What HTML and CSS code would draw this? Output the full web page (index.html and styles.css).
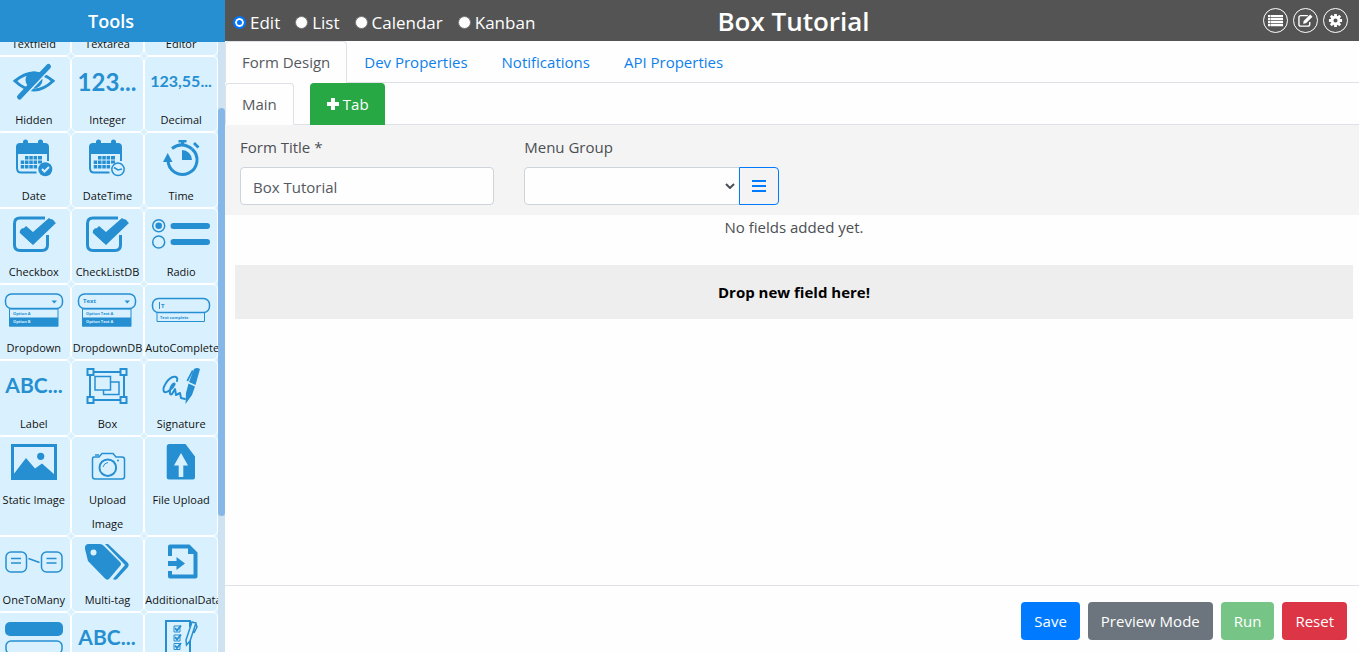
FILE: index.html
```html
<!DOCTYPE html>
<html lang="en">
<head>
<meta charset="utf-8">
<title>Box Tutorial</title>
<link rel="stylesheet" href="styles.css">
</head>
<body>
<div class="app">
  <aside class="sidebar">
    <h2 class="sidebar-title">Tools</h2>
    <div class="tools-wrap">
      <div class="tools" id="tools">
        <div class="tile"><span class="icon"></span><span>Textfield</span></div>
        <div class="tile"><span class="icon"></span><span>Textarea</span></div>
        <div class="tile"><span class="icon"></span><span>Editor</span></div>

        <div class="tile"><svg class="icon" viewBox="0 0 60 50"><path class="line w3" d="M11 24Q30 8 49 24Q30 42 11 24Z"/><circle cx="30" cy="23" r="8.500"/><path class="cut" d="M47 11L18 42"/><path class="line w5 round" d="M44.500 9.500L15.500 40"/></svg><span>Hidden</span></div>
        <div class="tile"><svg class="icon" viewBox="0 0 60 50"><text class="glyph g24" x="30" y="34">123...</text></svg><span>Integer</span></div>
        <div class="tile"><svg class="icon" viewBox="0 0 60 50"><text class="glyph g16" x="30" y="30">123,55...</text></svg><span>Decimal</span></div>

        <div class="tile"><svg class="icon" viewBox="0 0 60 50"><g id="cal"><path d="M12 21V14Q12 10 16 10H19V9Q19 6.500 21.500 6.500T24 9V10H34V9Q34 6.500 36.500 6.500T39 9V10H41Q45 10 45 14V21Z"/><path class="line w2" d="M13 20V35Q13 39.500 17 39.500H32.500M44 20V28"/><path d="M21 23h3.500v3.500h-3.500zM25.300 23h3.500v3.500h-3.500zM29.600 23h3.500v3.500h-3.500zM34 23h4v3.500h-4zM16.700 27.500h3.500v3.500h-3.500zM21 27.500h3.500v3.500h-3.500zM25.300 27.500h3.500v3.500h-3.500zM29.600 27.500h3.500v3.500h-3.500zM34 27.500h4v3h-4zM16.700 32h3.500v3.500h-3.500zM21 32h3.500v3.500h-3.500zM25.300 32h3.500v3.500h-3.500zM29.600 32h3.500v3.500h-3.500z"/></g><circle cx="41.300" cy="36.300" r="7"/><path class="line pale w2" d="M38 36l2.500 2.500L45 34"/></svg><span>Date</span></div>
        <div class="tile"><svg class="icon" viewBox="0 0 60 50"><use href="#cal"/><circle class="line panel w15" cx="41" cy="36.300" r="6.200"/><path class="line w15" d="M37 34.500L41 37L45 36"/></svg><span>DateTime</span></div>
        <div class="tile"><svg class="icon" viewBox="0 0 60 50"><path class="line w3" d="M17 27A14.500 14.500 0 1 0 41 16"/><path class="line w3" d="M21 15.500Q31 8 41 16"/><path d="M16.700 20L21.500 29H12ZM27.500 7H35.500V9.500H33V13H30V9.500H27.500ZM42 11L44 9L48.500 13.500L46.500 15.500ZM31 17A10 10 0 0 1 41 27H31Z"/></svg><span>Time</span></div>

        <div class="tile"><svg class="icon" viewBox="0 0 60 50"><g id="chk"><path class="line w3" d="M41 9H16Q10.500 9 10.500 14.500V36Q10.500 41.500 16 41.500H38Q43.500 41.500 43.500 36V26"/><path class="line w6 round" d="M47.500 13.500L28.300 31L19 22.500"/><path d="M15.500 23.500L22 17L29 23L45 9L52 14L29 36Z"/></g></svg><span>Checkbox</span></div>
        <div class="tile"><svg class="icon" viewBox="0 0 60 50"><use href="#chk"/></svg><span>CheckListDB</span></div>
        <div class="tile"><svg class="icon" viewBox="0 0 60 50"><circle class="line w15" cx="7.700" cy="16.700" r="6"/><circle cx="7.700" cy="16.700" r="3.300"/><circle class="line w15" cx="7.700" cy="33" r="6"/><path class="line w6 round" d="M22.500 17H56M22.500 33H56"/></svg><span>Radio</span></div>

        <div class="tile"><svg class="icon" viewBox="0 0 60 50"><g id="dd"><rect class="line w15" x="1.500" y="9" width="57" height="14.500" rx="6"/><path d="M47.500 15.500H53L50.300 18.500Z"/><rect class="line w1" x="5.500" y="24" width="48.500" height="17"/><path d="M5.500 32.500H54V41.500H5.500Z"/></g><text class="tiny" x="9" y="30">Option A</text><text class="tiny light" x="9" y="38">Option B</text></svg><span>Dropdown</span></div>
        <div class="tile"><svg class="icon" viewBox="0 0 60 50"><use href="#dd"/><text class="small" x="6" y="18">Text</text><text class="tiny" x="9" y="30">Option Text A</text><text class="tiny light" x="9" y="38">Option Text A</text></svg><span>DropdownDB</span></div>
        <div class="tile"><svg class="icon" viewBox="0 0 60 50"><rect class="line w15" x="1.500" y="13.500" width="57" height="14" rx="6"/><path class="line w1" d="M6 27.500V36.500H53.500V27.500M8.500 17V24"/><text class="small" x="10" y="23">T</text><text class="tiny" x="9" y="34">Text complete</text></svg><span>AutoComplete</span></div>

        <div class="tile"><svg class="icon" viewBox="0 0 60 50"><text class="glyph g20" x="30" y="32">ABC...</text></svg><span>Label</span></div>
        <div class="tile"><svg class="icon" viewBox="0 0 60 50"><path class="line w2" d="M13 11H47V39H13Z"/><path class="line w15" d="M26 33.500H42V21H34"/><path class="line w15" d="M26.500 29V33.500"/><rect class="line w15" x="18" y="15.500" width="15.500" height="13.500"/><path class="line panel w2" d="M10.500 8H16.500V14H10.500ZM43.500 8H49.500V14H43.500ZM10.500 36H16.500V42H10.500ZM43.500 36H49.500V42H43.500Z"/></svg><span>Box</span></div>
        <div class="tile"><svg class="icon" viewBox="0 0 60 50"><path class="line w2 round" d="M26 20C28 14 20 14 15 22C10 30 13 34 19 29C24 25 25 21 22 23C18 27 18 36 21 33L24 28L25 34L29 32L30 37L34 38"/><path d="M43 8Q46 6 49 8L44.500 24L38 21ZM37.500 22.500L44 25.500L41 34L34.500 43L35 32ZM41 9L35.500 19.500L37 20.500L42.500 10Z"/></svg><span>Signature</span></div>

        <div class="tile"><svg class="icon" viewBox="0 0 60 50"><rect class="line w3" x="8.500" y="8.500" width="43" height="33"/><circle cx="36.700" cy="19.300" r="3.600"/><path d="M9 38L22 21L31 31.500L38 26.500L51 38V42H9Z"/></svg><span>Static Image</span></div>
        <div class="tile"><svg class="icon" viewBox="0 0 60 50"><path class="line w15" d="M17 20H22L25 16.500H36L39 20H45Q47.500 20 47.500 22.500V39.500Q47.500 42 45 42H18Q15.500 42 15.500 39.500V22.500Q15.500 20 17 20ZM18 18H22"/><circle class="line w2" cx="30.800" cy="30.700" r="8.300"/><path class="line w1" d="M26 30Q27 26 31 25.500"/><circle cx="41" cy="23.500" r="1"/></svg><span>Upload<br>Image</span></div>
        <div class="tile"><svg class="icon" viewBox="0 0 60 50"><path fill-rule="evenodd" d="M18 7H34.500L44 19.500V40.500Q44 42.500 42 42.500H18Q15.700 42.500 15.700 40.500V9.500Q15.700 7 18 7ZM30 16L23 28.500H27.700V40H32.300V28.500H37Z"/></svg><span>File Upload</span></div>

        <div class="tile"><svg class="icon" viewBox="0 0 60 50"><rect class="line w15" x="2" y="15" width="20.500" height="20" rx="5"/><rect class="line w15" x="37.500" y="15" width="20.500" height="20" rx="5"/><path class="line w15" d="M7 21.500H17M7 26H17M42.500 21.500H52.500M42.500 26H52.500M24.500 21.500L35.500 25.500"/></svg><span>OneToMany</span></div>
        <div class="tile"><svg class="icon" viewBox="0 0 60 50"><path fill-rule="evenodd" d="M11 7H23Q25 7 27 9L43 25Q45 27 43 29L32 42Q30 43.500 28 41.500L11 24L8 12Q7.500 7.500 11 7ZM16.500 12.500A3 3 0 1 0 16.500 18.500A3 3 0 1 0 16.500 12.500Z"/><path d="M28 7H31L51 26Q52.500 28 51 30L40 42Q38 43.500 36 42L48 28Z"/></svg><span>Multi-tag</span></div>
        <div class="tile"><svg class="icon" viewBox="0 0 60 50"><path fill-rule="evenodd" d="M17 19V9.500Q17 7.500 19 7.500H38.500L46.500 15.500V39.500Q46.500 41.500 44.500 41.500H19Q17 41.500 17 39.500V34H21V37.500H42.500V17H37V11.500H21V19Z"/><path d="M17 24H25.500V20L34 26.500L25.500 33V29H17Z"/></svg><span>AdditionalData</span></div>

        <div class="tile"><svg class="icon" viewBox="0 0 60 50"><rect x="1" y="9" width="58" height="14" rx="5"/><rect class="line w15" x="2" y="28" width="56" height="13" rx="5"/></svg></div>
        <div class="tile"><svg class="icon" viewBox="0 0 60 50"><text class="glyph g20" x="30" y="32">ABC...</text></svg></div>
        <div class="tile"><svg class="icon" viewBox="0 0 60 50"><path class="line w2" d="M39 25V44H15V8H39V14"/><path class="line w1" d="M23 13H29V19H23ZM23 22H29V28H23ZM23 30.500H29V36.500H23Z"/><path class="line w2" d="M24 15L26 17.500L30 12.500M24 24L26 26.500L30 21.500M24 32.500L26 35L30 30"/><path class="line panel w15" d="M41 9L45 10L39 28L35.500 32L35 27ZM45 11L46 14L43 20"/></svg></div>
      </div>
      <div class="scroll-track"><div class="scroll-thumb"></div></div>
    </div>
  </aside>

  <main class="main">
    <header class="topbar">
      <div class="modes">
        <label><input type="radio" name="mode" checked>Edit</label>
        <label><input type="radio" name="mode">List</label>
        <label><input type="radio" name="mode">Calendar</label>
        <label><input type="radio" name="mode">Kanban</label>
      </div>
      <h1>Box Tutorial</h1>
      <div class="actions">
        <button class="round-btn" aria-label="List"><svg viewBox="0 0 16 16"><path d="M0 2h2.500v2.500H0zM3 2H16v2.500H3zM0 5.200h2.500v2.500H0zM3 5.200H16v2.500H3zM0 8.400h2.500v2.500H0zM3 8.400H16v2.500H3zM0 11.600h2.500v2.400H0zM3 11.600H16v2.400H3z"/></svg></button>
        <button class="round-btn" aria-label="Edit"><svg viewBox="0 0 16 16"><path class="outline" d="M10.500 2.800H3Q1 2.800 1 4.800V12Q1 14 3 14H10.500Q12.500 14 12.500 12V9.500"/><path d="M13 1.500L15.500 4L8.500 11L5.500 11.500L6 8.500Z"/></svg></button>
        <button class="round-btn" aria-label="Settings"><svg viewBox="0 0 16 16"><path class="teeth" d="M8 1V4M8 12V15M1 8H4M12 8H15M3 3L5 5M11 11L13 13M13 3L11 5M5 11L3 13"/><circle class="ring" cx="8" cy="8" r="3.700"/></svg></button>
      </div>
    </header>

    <nav class="tabs">
      <a class="tab active" href="#design">Form Design</a>
      <a class="tab" href="#dev">Dev Properties</a>
      <a class="tab" href="#notifications">Notifications</a>
      <a class="tab" href="#api">API Properties</a>
    </nav>
    <div class="tabs">
      <a class="tab active" href="#main">Main</a>
      <button class="add-tab"><svg viewBox="0 0 14 14"><path d="M5 1H9V5H13V9H9V13H5V9H1V5H5Z"/></svg>Tab</button>
    </div>

    <section class="form-row">
      <div class="field">
        <label for="form-title">Form Title *</label>
        <input class="control" id="form-title" type="text" value="Box Tutorial">
      </div>
      <div class="field">
        <label for="menu-group">Menu Group</label>
        <div class="group">
          <div class="select-wrap">
            <select class="control" id="menu-group"><option></option></select>
            <svg class="chevron" viewBox="0 0 10 6"><path d="M1 1L5 5L9 1"/></svg>
          </div>
          <button class="menu-btn" aria-label="Manage menu groups"><svg viewBox="0 0 14 14"><path d="M0 2H14M0 7H14M0 12H14"/></svg></button>
        </div>
      </div>
    </section>
    <p class="empty">No fields added yet.</p>
    <div class="drop">Drop new field here!</div>

    <footer class="footer">
      <button class="btn save">Save</button>
      <button class="btn preview">Preview Mode</button>
      <button class="btn run">Run</button>
      <button class="btn reset">Reset</button>
    </footer>
  </main>
</div>
<script src="app.js"></script>
</body>
</html>
```

FILE: styles.css
```css
* { box-sizing: border-box; }
body {
  margin: 0;
  font: 15px/24px "Open Sans", "Noto Sans", sans-serif;
  color: #4b4f53;
  background: #fefefe;
}
button, input, select { font: inherit; }
button { cursor: pointer; }
.app { display: flex; height: 100vh; }

/* Tool palette */
.sidebar { flex: 0 0 225px; display: flex; flex-direction: column; min-height: 0; background: #d9f1ff; }
.sidebar-title {
  flex: none; margin: 0; padding: 1px 3px 0 0; height: 42px;
  background: #268fd1; color: #fff; text-align: center;
  font-size: 18px; font-weight: 600; line-height: 41px;
}
.tools-wrap { display: flex; flex: 1; min-height: 0; }
.tools {
  flex: 1; min-width: 0; margin-left: -3px;
  display: grid; grid-template-columns: repeat(3, minmax(0, 1fr)); grid-auto-rows: max-content;
  overflow-x: hidden; overflow-y: auto; scrollbar-width: none;
}
.tile {
  min-height: 76px; border: 1px solid #fff; border-radius: 5px;
  display: flex; flex-direction: column; align-items: center;
  color: #111; font-size: 11px; text-align: center;
}
.tile > span:last-child { max-width: 100%; margin: 1px 0 -1px; }
.icon { flex: none; width: 60px; height: 50px; fill: #268fd1; overflow: visible; }
.line { fill: none; stroke: #268fd1; }
.line.panel { fill: #d9f1ff; }
.line.pale { stroke: #d9f1ff; }
.cut { fill: none; stroke: #d9f1ff; stroke-width: 2px; }
.w1 { stroke-width: 1px; }
.w15 { stroke-width: 1.5px; }
.w2 { stroke-width: 2px; }
.w3 { stroke-width: 3px; }
.w5 { stroke-width: 5px; }
.w6 { stroke-width: 6px; }
.round { stroke-linecap: round; stroke-linejoin: round; }
.glyph { font-family: Lato, sans-serif; font-weight: 700; text-anchor: middle; }
.g16 { font-size: 16px; }
.g20 { font-size: 21px; }
.g24 { font-size: 24px; }
.tiny { font-size: 4px; font-weight: 700; }
.small { font-size: 6px; font-weight: 700; }
.light { fill: #d9f1ff; }
.scroll-track { flex: 0 0 7px; background: #cfe2f1; padding-top: 66px; }
.scroll-thumb { height: 75%; border-radius: 4px; background: #85b8e8; }

/* Workspace */
.main { flex: 1; min-width: 0; display: flex; flex-direction: column; }
.topbar {
  flex: none; height: 41px; padding: 0 11px 0 14px;
  display: grid; grid-template-columns: 1fr auto 1fr; align-items: center;
  background: #545454; color: #fff;
}
.topbar h1 { margin: 0; padding-top: 1px; font-size: 26px; font-weight: 600; line-height: 40px; }
.modes { display: flex; gap: 15px; margin-left: -6px; font-size: 17px; padding-top: 4px; }
.modes label { display: flex; align-items: center; gap: 4px; }
.modes input {
  appearance: none; width: 13px; height: 13px; margin: 0;
  border: 1px solid #767676; border-radius: 50%; background: #fff;
}
.modes input:checked { border: 2px solid #0075ff; background: #0075ff; box-shadow: inset 0 0 0 2px #fff; }
.actions { display: flex; gap: 5px; justify-content: flex-end; }
.round-btn {
  width: 25px; height: 25px; padding: 0; border: 1px solid #fff; border-radius: 50%;
  background: none; display: grid; place-items: center;
}
.round-btn svg { width: 15px; height: 15px; fill: #fff; }
.round-btn .outline { fill: none; stroke: #fff; stroke-width: 1.5px; }
.round-btn .teeth { stroke: #fff; stroke-width: 3px; }
.round-btn .ring { fill: none; stroke: #fff; stroke-width: 3px; }

.tabs { flex: none; display: flex; border-bottom: 1px solid #dee2e6; }
.tab {
  margin-bottom: -1px; padding: 8px 16px; height: 42px;
  border: 1px solid transparent; border-radius: 4px 4px 0 0;
  color: #0f80ea; text-decoration: none;
}
.tab.active { color: #55595e; background: #fefefe; border-color: #dee2e6 #dee2e6 #fefefe; }
.add-tab {
  margin: 0 0 -1px 16px; padding: 0 16px; height: 42px;
  border: 0; border-radius: 4px 4px 0 0; background: #28a745; color: #fff;
  display: flex; align-items: center; gap: 3px;
}
.add-tab svg { width: 14px; height: 14px; fill: #fff; }

.form-row {
  flex: none; padding: 10px 12px 10px 15px; background: #f4f4f4;
  display: grid; grid-template-columns: repeat(4, 1fr); gap: 30px;
}
.field label { display: block; margin-bottom: 8px; }
.control {
  display: block; width: 100%; height: 38px; padding: 2px 12px 0;
  border: 1px solid #ced4da; border-radius: 4px; background: #fefefe; color: #55595e;
}
.group { display: flex; }
.select-wrap { flex: 1; position: relative; margin-right: -1px; }
.select-wrap .control { appearance: none; border-radius: 4px 0 0 4px; }
.chevron {
  position: absolute; right: 5px; top: 16px; width: 10px; height: 6px;
  fill: none; stroke: #495057; stroke-width: 2px; pointer-events: none;
}
.menu-btn {
  position: relative; width: 40px; height: 38px; padding: 0;
  border: 1px solid #007bff; border-radius: 0 4px 4px 0; background: transparent;
  display: grid; place-items: center;
}
.menu-btn svg { width: 14px; height: 14px; stroke: #007bff; stroke-width: 2px; }
.empty { margin: 0; text-align: center; padding-left: 4px; }
.drop {
  margin: 26px 6px 0 10px; padding: 15px; background: #eee;
  color: #000; font-weight: 700; text-align: center;
}
.footer {
  margin-top: auto; padding: 16px 12px 12px; border-top: 1px solid #dee2e6;
  display: flex; justify-content: flex-end; gap: 8px;
}
.btn { height: 38px; padding: 0 13px; border: 0; border-radius: 4px; color: #fff; }
.save { background: #007bff; }
.preview { background: #6c757d; }
.run { background: #76c587; }
.reset { background: #dc3545; }
```

FILE: app.js
```js
document.getElementById("tools").scrollTop = 62;
```
